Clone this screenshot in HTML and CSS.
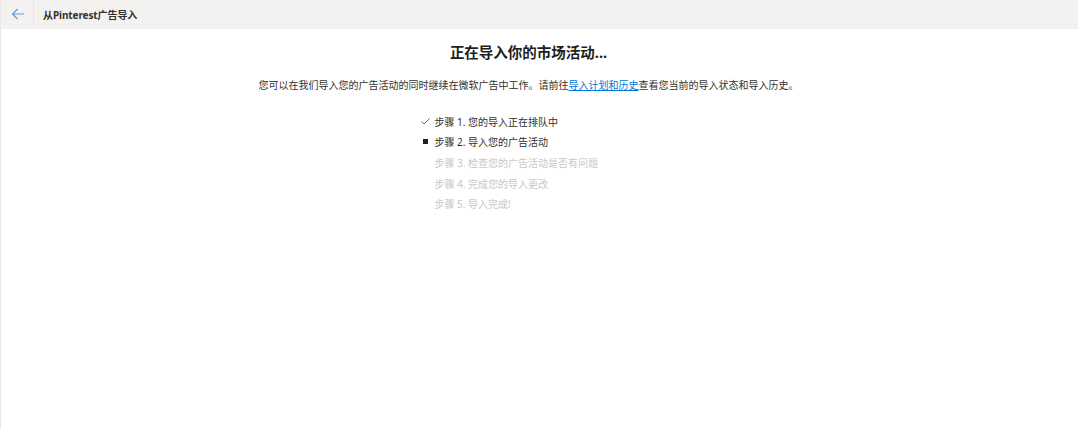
FILE: index.html
```html
<!DOCTYPE html>
<html lang="zh-CN">
<head>
<meta charset="utf-8">
<link rel="stylesheet" href="styles.css">
</head>
<body>
<div class="page">
  <header class="topbar">
    <button class="back" aria-label="返回">
      <svg width="14" height="12" viewBox="0 0 14 12"><path d="M13 6H1.5M6.5 1L1.5 6l5 5" fill="none" stroke="#5a9be0" stroke-width="1.2"/></svg>
    </button>
    <div class="page-title">从Pinterest广告导入</div>
  </header>
  <main class="content">
    <h1 class="heading">正在导入你的市场活动...</h1>
    <p class="desc">您可以在我们导入您的广告活动的同时继续在微软广告中工作。请前往<a href="#" class="link">导入计划和历史</a>查看您当前的导入状态和导入历史。</p>
    <ul class="steps">
      <li class="step done"><span class="mark"><svg width="9" height="7" viewBox="0 0 9 7"><path d="M0.5 3.5L3 6L8.5 0.5" fill="none" stroke="#605e5c" stroke-width="0.9"/></svg></span>步骤 1. 您的导入正在排队中</li>
      <li class="step active"><span class="mark"><span class="square"></span></span>步骤 2. 导入您的广告活动</li>
      <li class="step pending"><span class="mark"></span>步骤 3. 检查您的广告活动是否有问题</li>
      <li class="step pending"><span class="mark"></span>步骤 4. 完成您的导入更改</li>
      <li class="step pending"><span class="mark"></span>步骤 5. 导入完成!</li>
    </ul>
  </main>
</div>
</body>
</html>
```
FILE: styles.css
```css
html, body {
  margin: 0;
  padding: 0;
  background: #ffffff;
}
body {
  font-family: "Noto Sans", "Noto Sans CJK SC", sans-serif;
  color: #323130;
}
.page {
  width: 1078px;
  height: 429px;
  border-left: 1px solid #e9e8e7;
  box-sizing: border-box;
}
.topbar {
  height: 29px;
  background: #f3f2f1;
  display: flex;
  align-items: stretch;
}
.back {
  width: 33px;
  border: none;
  border-right: 1px solid #e6e5e4;
  background: transparent;
  padding: 0 0 0 1px;
  display: flex;
  align-items: center;
  justify-content: center;
  margin-bottom: 5px;
}
.back svg { margin-top: 4px; }
.page-title {
  font-size: 10px;
  font-weight: 700;
  display: flex;
  align-items: center;
  padding-left: 9px;
  padding-bottom: 1px;
  letter-spacing: -0.1px;
}
.content {
  display: flex;
  flex-direction: column;
  align-items: center;
  padding-right: 22px;
}
.heading {
  margin: 13px 0 0;
  font-size: 14.5px;
  line-height: 20px;
  font-weight: 700;
  color: #201f1e;
}
.desc {
  margin: 15px 0 0;
  font-size: 10px;
  line-height: 16px;
  color: #323130;
}
.link {
  color: #0078d4;
  text-decoration: underline;
}
.steps {
  list-style: none;
  margin: 18px 0 0;
  padding: 0;
  width: 216px;
}
.step {
  display: flex;
  align-items: center;
  height: 20.6px;
  font-size: 10px;
}
.mark {
  width: 14px;
  display: flex;
  align-items: center;
  justify-content: flex-start;
  flex: none;
}
.square {
  display: block;
  width: 5px;
  height: 5px;
  background: #201f1e;
  margin-left: 2px;
}
.done, .active { color: #323130; }
.pending { color: #c8c8c8; }
```
